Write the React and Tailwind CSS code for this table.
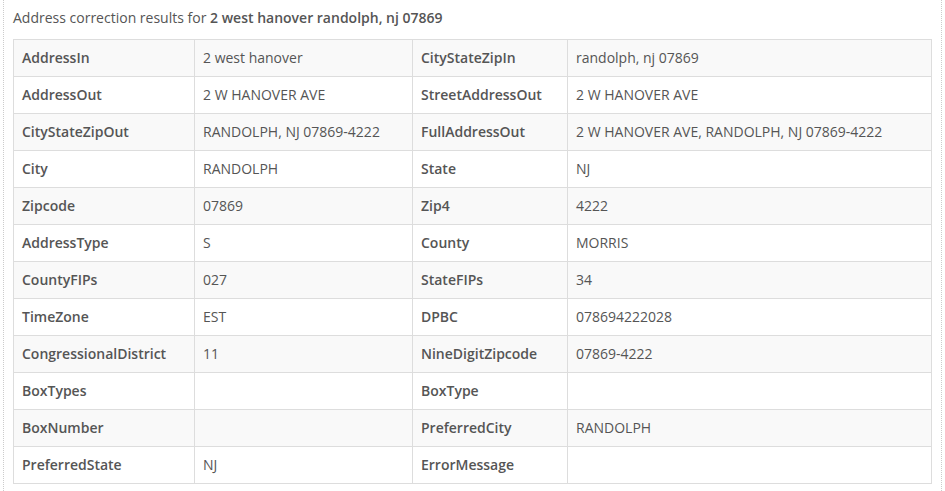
import React from "react";

const rows = [
  ["AddressIn", "2 west hanover", "CityStateZipIn", "randolph, nj 07869"],
  ["AddressOut", "2 W HANOVER AVE", "StreetAddressOut", "2 W HANOVER AVE"],
  ["CityStateZipOut", "RANDOLPH, NJ 07869-4222", "FullAddressOut", "2 W HANOVER AVE, RANDOLPH, NJ 07869-4222"],
  ["City", "RANDOLPH", "State", "NJ"],
  ["Zipcode", "07869", "Zip4", "4222"],
  ["AddressType", "S", "County", "MORRIS"],
  ["CountyFIPs", "027", "StateFIPs", "34"],
  ["TimeZone", "EST", "DPBC", "078694222028"],
  ["CongressionalDistrict", "11", "NineDigitZipcode", "07869-4222"],
  ["BoxTypes", "", "BoxType", ""],
  ["BoxNumber", "", "PreferredCity", "RANDOLPH"],
  ["PreferredState", "NJ", "ErrorMessage", ""],
];

export default function App() {
  return (
    <div
      className="w-[945px] h-[491px] bg-white text-[#555] text-[14px] pl-[3px] overflow-hidden"
      style={{ fontFamily: '"Open Sans", "Liberation Sans", sans-serif' }}
    >
      <div className="w-[939px] h-full border-l border-r border-dotted border-[#ccc] pl-[9px] pr-[10px]">
        <div className="pt-[8px] leading-[20px] mb-[11px]">
          Address correction results for{" "}
          <span className="font-semibold">2 west hanover randolph, nj 07869</span>
        </div>
        <table className="w-[918px] border-collapse border border-[#ddd] table-fixed">
          <colgroup>
            <col className="w-[181px]" />
            <col className="w-[218px]" />
            <col className="w-[155px]" />
            <col className="w-[364px]" />
          </colgroup>
          <tbody>
            {rows.map((r, i) => (
              <tr key={i} className={i % 2 === 0 ? "bg-[#f9f9f9]" : "bg-white"}>
                <td className="border border-[#ddd] px-[8px] py-[8px] leading-[20px] font-semibold whitespace-nowrap">{r[0]}</td>
                <td className="border border-[#ddd] px-[8px] py-[8px] leading-[20px] whitespace-nowrap">{r[1]}</td>
                <td className="border border-[#ddd] px-[8px] py-[8px] leading-[20px] font-semibold whitespace-nowrap">{r[2]}</td>
                <td className="border border-[#ddd] px-[8px] py-[8px] leading-[20px] whitespace-nowrap">{r[3]}</td>
              </tr>
            ))}
          </tbody>
        </table>
      </div>
    </div>
  );
}
